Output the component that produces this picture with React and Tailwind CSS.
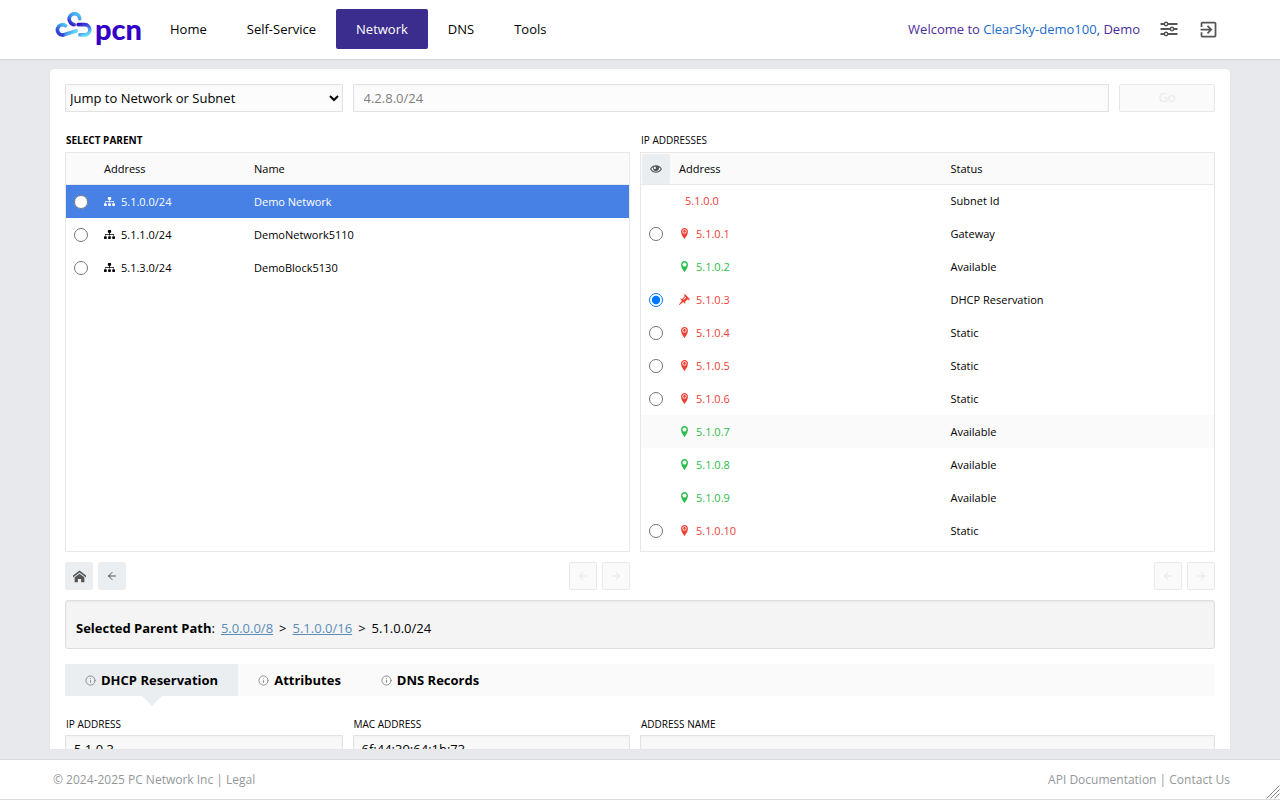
import { useState } from "react";
import { FaSitemap } from "react-icons/fa";
import { ImEye, ImHome, ImLocation, ImLocation2, ImPushpin } from "react-icons/im";
import { MdExitToApp } from "react-icons/md";
import { ArrowLeft, ArrowRight, Info } from "lucide-react";
import clsx from "clsx";

const navItems = ["Home", "Self-Service", "Network", "DNS", "Tools"];

const parents = [
  { address: "5.1.0.0/24", name: "Demo Network" },
  { address: "5.1.1.0/24", name: "DemoNetwork5110" },
  { address: "5.1.3.0/24", name: "DemoBlock5130" },
];

const addresses = [
  { ip: "5.1.0.0", status: "Subnet Id" },
  { ip: "5.1.0.1", status: "Gateway" },
  { ip: "5.1.0.2", status: "Available" },
  { ip: "5.1.0.3", status: "DHCP Reservation" },
  { ip: "5.1.0.4", status: "Static" },
  { ip: "5.1.0.5", status: "Static" },
  { ip: "5.1.0.6", status: "Static" },
  { ip: "5.1.0.7", status: "Available", active: true },
  { ip: "5.1.0.8", status: "Available" },
  { ip: "5.1.0.9", status: "Available" },
  { ip: "5.1.0.10", status: "Static" },
];

const tabs = ["DHCP Reservation", "Attributes", "DNS Records"];

const Logo = () => (
  <a href="#" className="flex items-center gap-[3px] w-[95px] h-8">
    <svg viewBox="46 38 112 78" className="w-[37px] h-[26px] shrink-0 -mt-2" fill="none">
      <defs>
        <linearGradient id="left" x1="76" y1="72" x2="108" y2="96" gradientUnits="userSpaceOnUse">
          <stop offset="0" stopColor="#2b45d4" />
          <stop offset="1" stopColor="#5fd6fb" />
        </linearGradient>
        <linearGradient id="leftArc" x1="80" y1="76" x2="60" y2="108" gradientUnits="userSpaceOnUse">
          <stop offset="0" stopColor="#55cbfa" />
          <stop offset="0.6" stopColor="#3568e4" />
          <stop offset="1" stopColor="#2f35cc" />
        </linearGradient>
        <linearGradient id="top" x1="122" y1="42" x2="96" y2="78" gradientUnits="userSpaceOnUse">
          <stop offset="0" stopColor="#54c8fa" />
          <stop offset="0.55" stopColor="#3e8cf0" />
          <stop offset="1" stopColor="#3412c4" />
        </linearGradient>
        <linearGradient id="right" x1="118" y1="74" x2="134" y2="110" gradientUnits="userSpaceOnUse">
          <stop offset="0" stopColor="#3412c4" />
          <stop offset="0.5" stopColor="#3f70e8" />
          <stop offset="1" stopColor="#63dcfc" />
        </linearGradient>
      </defs>
      <g strokeWidth="11" strokeLinecap="round">
        <path d="M70 107 L110 95" stroke="url(#left)" />
        <path d="M78 79 A15.5 15.5 0 1 0 70 107" stroke="url(#leftArc)" />
        <path d="M121 58 A16 16 0 1 0 92 68 Q97 76 104 76" stroke="url(#top)" />
        <path d="M116 76 H136 A15.500 15.500 0 0 1 136 107 H121" stroke="url(#right)" />
      </g>
    </svg>
    <span className="font-['Lato',sans-serif] font-black text-[29px] leading-8 text-[#3300c8]">
      pcn
    </span>
  </a>
);

const SlidersIcon = () => (
  <svg viewBox="0 0 18 16" className="w-[18px] h-4" fill="none" stroke="#555">
    <path strokeWidth="2" d="M0.500 3H4M8 3H17.500M0.500 8H10M14 8H17.500M0.500 13H4M8 13H17.500" />
    <circle cx="6" cy="3" r="1.700" strokeWidth="1.400" />
    <circle cx="12" cy="8" r="1.700" strokeWidth="1.400" />
    <circle cx="6" cy="13" r="1.700" strokeWidth="1.400" />
  </svg>
);

const AddressIcon = ({ status }) => {
  if (status === "Subnet Id") return null;
  if (status === "DHCP Reservation") return <ImPushpin size={11} />;
  if (status === "Available") return <ImLocation size={11} />;
  return <ImLocation2 size={11} />;
};

const PageButton = ({ label, disabled, children }) => (
  <button
    aria-label={label}
    disabled={disabled}
    className={clsx(
      "size-7 flex items-center justify-center rounded-[2px]",
      disabled
        ? "bg-[#fafafa] border border-[#e8e8e8] text-[#e6e6e6]"
        : "bg-[#ebeef1] text-[#555]"
    )}
  >
    {children}
  </button>
);

const Pager = () => (
  <div className="flex gap-[5px]">
    <PageButton label="Previous page" disabled>
      <ArrowLeft size={12} />
    </PageButton>
    <PageButton label="Next page" disabled>
      <ArrowRight size={12} />
    </PageButton>
  </div>
);

const Field = ({ id, label, value, className }) => (
  <div className={className}>
    <label htmlFor={id} className="block text-[10px] leading-[14px] pl-px mb-1 uppercase">
      {label}
    </label>
    <input
      id={id}
      readOnly
      value={value}
      className="w-full h-7 px-2 border border-[#e3e3e3] bg-[#f8f8f8] shadow-[inset_0_1px_3px_#00000008]"
    />
  </div>
);

const App = () => {
  const [parent, setParent] = useState("5.1.0.0/24");
  const [selectedIp, setSelectedIp] = useState("5.1.0.3");
  const [tab, setTab] = useState("DHCP Reservation");

  return (
    <div className="h-screen flex flex-col bg-[#e8e9ed] font-['Open_Sans','Noto_Sans',sans-serif] text-[13px] text-black">
      {/* Header */}
      <header className="h-[59px] shrink-0 flex items-center justify-between pl-[55px] pr-[61px] bg-white border-b border-white shadow-[0_1px_1px_#d5d6da]">
        <div className="flex items-center">
          <Logo />
          <nav className="flex">
            {navItems.map((item) => (
              <a
                key={item}
                href="#"
                className={clsx(
                  "h-10 px-5 pt-0.5 flex items-center rounded-[2px]",
                  item === "Network" && "bg-[#3b2d8e] text-white"
                )}
              >
                {item}
              </a>
            ))}
          </nav>
        </div>
        <div className="flex items-center">
          <p className="text-[#4b2e9b] mr-5 pt-0.5">
            Welcome to{" "}
            <a href="#" className="text-[#1a6bcc]">
              ClearSky-demo100
            </a>
            , Demo
          </p>
          <button aria-label="Settings" className="mr-5">
            <SlidersIcon />
          </button>
          <button aria-label="Log out">
            <MdExitToApp size={21} color="#555" />
          </button>
        </div>
      </header>

      {/* Content */}
      <main className="flex-1 min-h-0 px-[50px] py-[10px]">
        <div className="h-full overflow-hidden bg-white rounded-t-[4px] p-[15px] shadow-[0_0_1px_#c8c9cd]">
          <div className="flex mb-[21px]">
            <div className="w-1/4 pr-[10px]">
              <select
                aria-label="Search type"
                className="w-full h-7 border border-[#e3e3e3] bg-[#fcfcfc] shadow-[inset_0_1px_4px_#00000008]"
              >
                <option>Jump to Network or Subnet</option>
              </select>
            </div>
            <div className="w-2/3 pr-[10px]">
              <input
                aria-label="Network or subnet"
                placeholder="4.2.8.0/24"
                className="w-full h-7 px-[10px] border border-[#e3e3e3] bg-[#fcfcfc] placeholder:text-[#808080] shadow-[inset_0_1px_4px_#00000008]"
              />
            </div>
            <button
              disabled
              className="w-1/12 h-7 border border-[#e8e8e8] bg-[#fafafa] text-[#ebebeb] rounded-[2px]"
            >
              Go
            </button>
          </div>

          <div className="flex">
            {/* Parent networks */}
            <section className="w-1/2 pr-[10px]">
              <h2 className="text-[10px] leading-[14px] font-bold pl-px mb-[5px]">SELECT PARENT</h2>
              <div className="h-[400px] border border-[#e8e8e8]">
                <table className="w-full table-fixed border-separate border-spacing-0 text-[11px] text-left">
                  <thead>
                    <tr className="h-8 bg-[#fafafa]">
                      <th className="w-[30px] border-b border-[#e8e8e8]" aria-label="Select" />
                      <th className="w-[150px] px-2 pt-0.5 font-normal border-b border-[#e8e8e8]">Address</th>
                      <th className="px-2 pt-0.5 font-normal border-b border-[#e8e8e8]">Name</th>
                    </tr>
                  </thead>
                  <tbody>
                    {parents.map((row) => (
                      <tr
                        key={row.address}
                        className={clsx("h-[33px]", row.address === parent && "bg-[#4781e6] text-white")}
                      >
                        <td className="pl-2">
                          <input
                            type="radio"
                            name="parent"
                            aria-label={row.address}
                            checked={false}
                            onChange={() => setParent(row.address)}
                            className="block size-[14px]"
                          />
                        </td>
                        <td className="px-2">
                          <span className="flex items-center gap-[6px]">
                            <FaSitemap className="size-[11px]" />
                            <span className="pt-0.5">{row.address}</span>
                          </span>
                        </td>
                        <td className="px-2 pt-0.5">{row.name}</td>
                      </tr>
                    ))}
                  </tbody>
                </table>
              </div>
              <div className="flex justify-between mt-[10px]">
                <div className="flex gap-[5px]">
                  <PageButton label="Top level">
                    <ImHome size={13} />
                  </PageButton>
                  <PageButton label="Up one level">
                    <ArrowLeft size={12} />
                  </PageButton>
                </div>
                <Pager />
              </div>
            </section>

            {/* Addresses of the selected parent */}
            <section className="w-1/2">
              <h2 className="text-[10px] leading-[14px] pl-px mb-[5px]">IP ADDRESSES</h2>
              <div className="h-[400px] border border-[#e8e8e8]">
                <table className="w-full table-fixed border-separate border-spacing-0 text-[11px] text-left">
                  <thead>
                    <tr className="h-[31px] bg-[#fafafa]">
                      <th className="w-[30px] p-px pb-0">
                        <button
                          aria-label="Toggle visibility"
                          className="w-7 h-[30px] flex items-center justify-center bg-[#ebeef1] text-[#555] rounded-[2px]"
                        >
                          <ImEye size={12} />
                        </button>
                      </th>
                      <th className="px-2 pt-0.5 font-normal">Address</th>
                      <th className="px-2 pt-0.5 font-normal">Status</th>
                    </tr>
                  </thead>
                  <tbody className="[&>tr:first-child>td]:shadow-[inset_0_1px_#e8e8e8]">
                    {addresses.map(({ ip, status, active }) => (
                      <tr key={ip} className={clsx("h-[33px]", active && "bg-[#fafafa]")}>
                        <td className="pl-2">
                          {status !== "Available" && status !== "Subnet Id" && (
                            <input
                              type="radio"
                              name="address"
                              aria-label={ip}
                              checked={selectedIp === ip}
                              onChange={() => setSelectedIp(ip)}
                              className="block size-[14px]"
                            />
                          )}
                        </td>
                        <td className={clsx("px-2", status === "Available" ? "text-[#28bd4c]" : "text-[#ef4035]")}>
                          <span className="flex items-center gap-[6px]">
                            <AddressIcon status={status} />
                            <span className={clsx("pt-0.5", status === "Subnet Id" && "pl-[6px]")}>{ip}</span>
                          </span>
                        </td>
                        <td className="px-2 pt-0.5">{status}</td>
                      </tr>
                    ))}
                  </tbody>
                </table>
              </div>
              <div className="flex justify-end mt-[10px]">
                <Pager />
              </div>
            </section>
          </div>

          <div className="mt-[10px] h-[49px] px-[10px] pt-2 flex items-center gap-[6px] border border-[#dedede] rounded-[3px] bg-[#f4f4f4] shadow-[inset_0_1px_2px_#0000000d]">
            <span>
              <b>Selected Parent Path</b>:
            </span>
            <a href="#" className="text-[#5b8db8] underline">
              5.0.0.0/8
            </a>
            <span>&gt;</span>
            <a href="#" className="text-[#5b8db8] underline">
              5.1.0.0/16
            </a>
            <span>&gt;</span>
            <span>{parent}</span>
          </div>

          {/* Detail tabs */}
          <div className="mt-[15px] h-8 flex bg-[#fafafa]">
            {tabs.map((item) => (
              <button
                key={item}
                onClick={() => setTab(item)}
                className={clsx(
                  "relative px-5 flex items-center gap-[5px] font-bold",
                  tab === item && "bg-[#ebeef1]"
                )}
              >
                <Info size={11} strokeWidth={2} color="#888" />
                <span className="pt-0.5">{item}</span>
                {tab === item && (
                  <span className="absolute top-full left-1/2 -translate-x-1/2 border-x-10 border-t-10 border-x-transparent border-t-[#ebeef1]" />
                )}
              </button>
            ))}
          </div>

          <div className="flex mt-[21px]">
            <Field id="ip" label="IP Address" value="5.1.0.3" className="w-1/4 pr-[10px]" />
            <Field id="mac" label="MAC Address" value="6f:44:39:64:1b:73" className="w-1/4 pr-[10px]" />
            <Field id="name" label="Address Name" value="" className="w-1/2" />
          </div>
        </div>
      </main>

      <footer className="relative h-[41px] shrink-0 flex items-center justify-between pl-[53px] pr-[50px] bg-white border-y border-[#dcdcde] text-xs text-[#94979b]">
        <p>
          © 2024-2025 PC Network Inc | <a href="#">Legal</a>
        </p>
        <p>
          <a href="#">API Documentation</a> | <a href="#">Contact Us</a>
        </p>
        <svg viewBox="0 0 14 14" className="absolute right-0 bottom-0 size-[14px]" stroke="#888" fill="none">
          <path d="M0.500 13.500L13.500 0.500M4.500 13.500L13.500 4.500M8.500 13.500L13.500 8.500" />
        </svg>
      </footer>
    </div>
  );
};

export default App;
